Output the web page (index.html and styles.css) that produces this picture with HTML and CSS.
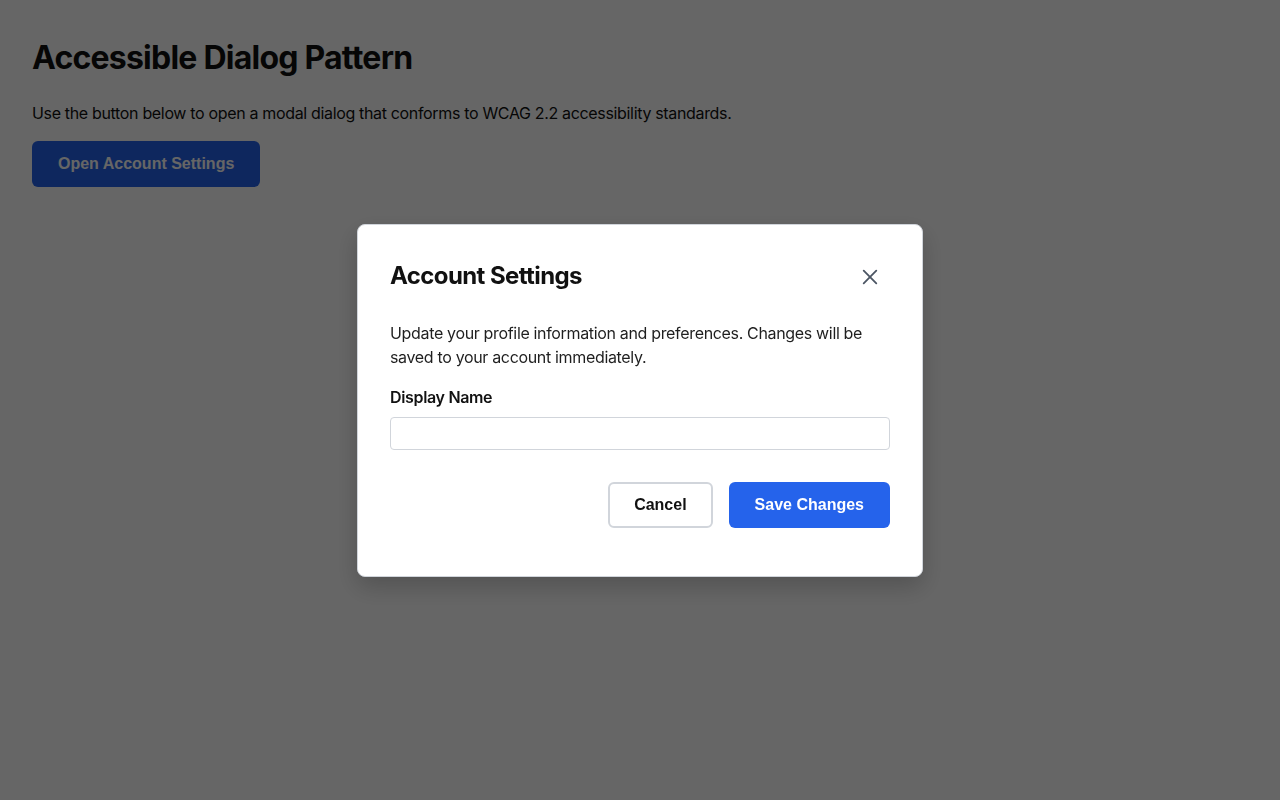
FILE: index.html
```html
<!DOCTYPE html>
<html lang="en">
<head>
<meta charset="utf-8">
<title>Accessible Dialog Pattern</title>
<link rel="stylesheet" href="styles.css">
</head>
<body>
<main class="page">
  <h1 class="page-title">Accessible Dialog Pattern</h1>
  <p class="page-text">Use the button below to open a modal dialog that conforms to WCAG 2.2 accessibility standards.</p>
  <button class="btn btn-primary" type="button">Open Account Settings</button>
</main>
<div class="overlay">
  <div class="dialog" role="dialog" aria-modal="true" aria-labelledby="dlg-title">
    <div class="dialog-header">
      <h2 class="dialog-title" id="dlg-title">Account Settings</h2>
      <button class="close-btn" type="button" aria-label="Close">
        <svg width="20" height="20" viewBox="0 0 20 20" aria-hidden="true"><path d="M3 3L17 17M17 3L3 17" stroke="#4b5563" stroke-width="2" stroke-linecap="round" fill="none"/></svg>
      </button>
    </div>
    <p class="dialog-text">Update your profile information and preferences. Changes will be saved to your account immediately.</p>
    <label class="field-label" for="name">Display Name</label>
    <input class="field-input" id="name" type="text">
    <div class="dialog-actions">
      <button class="btn btn-secondary" type="button">Cancel</button>
      <button class="btn btn-primary" type="button">Save Changes</button>
    </div>
  </div>
</div>
</body>
</html>
```

FILE: styles.css
```css
* { box-sizing: border-box; }
html, body { margin: 0; height: 100%; }
body {
  font-family: Inter, "Noto Sans", sans-serif;
  font-size: 16px;
  line-height: 1.5;
  letter-spacing: -0.021em;
  color: #111;
  background: #fff;
}
.page { padding: 32px; }
.page-title {
  margin: 7px 0 24px;
  font-size: 32px;
  line-height: 1.2;
  font-weight: 700;
  letter-spacing: -0.024em;
}
.page-text { margin: 0 0 16px; }
.btn {
  font-family: "Liberation Sans", Arial, sans-serif;
  font-size: 16px;
  font-weight: 700;
  line-height: 18px;
  letter-spacing: 0;
  padding: 12px 24px;
  border: 2px solid transparent;
  border-radius: 6px;
  cursor: pointer;
}
.btn-primary { background: #2563eb; color: #fff; }
.btn-secondary { background: #fff; color: #111; border-color: #d1d5db; }
.overlay {
  position: fixed;
  inset: 0;
  background: rgba(0, 0, 0, 0.6);
  display: flex;
  align-items: center;
  justify-content: center;
}
.dialog {
  width: 566px;
  background: #fff;
  border: 1px solid #d1d5db;
  border-radius: 8px;
  padding: 32px 32px 48px;
  box-shadow: 0 10px 25px rgba(0, 0, 0, 0.2);
}
.dialog-header {
  display: flex;
  align-items: center;
  justify-content: space-between;
  height: 40px;
  margin-bottom: 24px;
}
.dialog-title {
  margin: 0;
  font-size: 24px;
  line-height: 1.2;
  font-weight: 700;
  letter-spacing: -0.025em;
  color: #111;
}
.close-btn {
  width: 40px;
  height: 40px;
  padding: 0;
  border: 0;
  background: transparent;
  display: flex;
  align-items: center;
  justify-content: center;
  border-radius: 4px;
}
.close-btn svg { width: 18px; height: 18px; }
.dialog-text { margin: 0 0 16px; color: #1f1f1f; }
.field-label {
  display: block;
  font-weight: 600;
  margin-bottom: 8px;
}
.field-input {
  display: block;
  width: 100%;
  height: 33px;
  border: 1px solid #d1d5db;
  border-radius: 4px;
  font: inherit;
  padding: 4px 8px;
}
.dialog-actions {
  display: flex;
  justify-content: flex-end;
  gap: 16px;
  margin-top: 32px;
}
```
